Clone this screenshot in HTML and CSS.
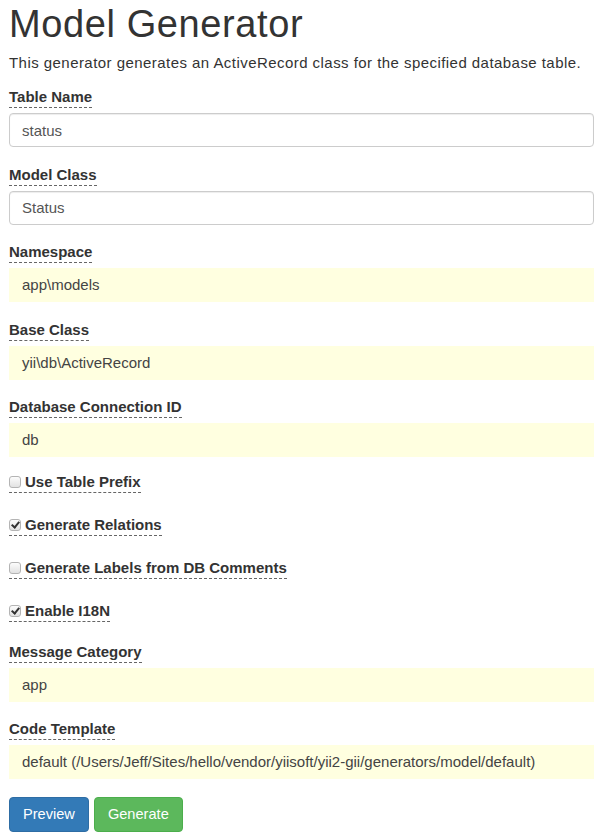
FILE: index.html
```
<!DOCTYPE html>
<html lang="en">
<head>
    <meta charset="UTF-8">
    <title>Model Generator</title>

    <link rel="stylesheet" href="styles.css">
</head>
<body>
<div class="default-view">
    <h1>Model Generator</h1>
    <p class="intro">This generator generates an ActiveRecord class for the specified database table.</p>

    <form class="generator-form">
        <div class="form-group">
            <label class="help">Table Name</label>
            <input type="text" class="form-control" value="status">
        </div>
        <div class="form-group">
            <label class="help">Model Class</label>
            <input type="text" class="form-control" value="Status">
        </div>
        <div class="form-group sticky">
            <label class="help">Namespace</label>
            <div class="sticky-value">app\models</div>
        </div>
        <div class="form-group sticky">
            <label class="help">Base Class</label>
            <div class="sticky-value">yii\db\ActiveRecord</div>
        </div>
        <div class="form-group sticky">
            <label class="help">Database Connection ID</label>
            <div class="sticky-value">db</div>
        </div>

        <div class="form-group checkbox">
            <label class="help"><input type="checkbox">Use Table Prefix</label>
        </div>
        <div class="form-group checkbox">
            <label class="help"><input type="checkbox" checked>Generate Relations</label>
        </div>
        <div class="form-group checkbox">
            <label class="help"><input type="checkbox">Generate Labels from DB Comments</label>
        </div>
        <div class="form-group checkbox">
            <label class="help"><input type="checkbox" checked>Enable I18N</label>
        </div>

        <div class="form-group sticky">
            <label class="help">Message Category</label>
            <div class="sticky-value">app</div>
        </div>
        <div class="form-group sticky">
            <label class="help">Code Template</label>
            <div class="sticky-value">default (/Users/Jeff/Sites/hello/vendor/yiisoft/yii2-gii/generators/model/default)</div>
        </div>

        <div class="buttons">
            <button type="button" class="btn btn-primary">Preview</button>
            <button type="button" class="btn btn-success">Generate</button>
        </div>
    </form>
</div>
</body>
</html>
```

FILE: styles.css
```
* {
    margin: 0;
    padding: 0;
    box-sizing: border-box;
}

body {
    font-family: "Liberation Sans", Arial, sans-serif;
    font-size: 14px;
    line-height: 20px;
    color: #333;
    background-color: #fff;
}

.default-view {
    padding: 4px 6px 0 9px;
}

h1 {
    font-size: 38px;
    font-weight: normal;
    line-height: 40px;
    letter-spacing: 0.6px;
    margin-bottom: 9px;
}

.intro {
    font-size: 15px;
    letter-spacing: 0.45px;
    margin-bottom: 14px;
}

.form-group {
    margin-bottom: 17.5px;
}

.form-group label {
    display: inline-block;
    font-weight: bold;
    font-size: 15px;
    margin-bottom: 5px;
}

label.help {
    border-bottom: 1px dashed #666;
}

.form-control {
    display: block;
    width: 100%;
    height: 34px;
    padding: 6px 12px;
    font-family: inherit;
    font-size: 15px;
    color: #555;
    background-color: #fff;
    border: 1px solid #ccc;
    border-radius: 4px;
    box-shadow: inset 0 1px 1px rgba(0, 0, 0, 0.075);
}

.sticky-value {
    height: 34px;
    padding: 7px 13px;
    font-size: 15px;
    color: #444;
    background-color: #ffffe0;
    white-space: nowrap;
    overflow: hidden;
}

.checkbox {
    margin-bottom: 21.5px;
}

.sticky + .checkbox {
    margin-top: -3px;
}

.checkbox + .sticky {
    margin-top: -2px;
}

.checkbox label {
    display: inline-flex;
    align-items: center;
    margin-bottom: 0;
}

.checkbox input {
    -webkit-appearance: none;
    appearance: none;
    position: relative;
    width: 12px;
    height: 12px;
    margin: 1px 4px 0 0;
    border: 1px solid #b4b4b4;
    border-radius: 3px;
    background: linear-gradient(#fcfcfc, #e2e2e2);
}

.checkbox input:checked::after {
    content: "";
    position: absolute;
    left: 3px;
    top: 0;
    width: 3px;
    height: 6px;
    border: solid #333;
    border-width: 0 2px 2px 0;
    transform: rotate(40deg);
}

.buttons {
    display: flex;
    gap: 5px;
    margin-top: 0;
}

.btn {
    height: 35px;
    padding: 0 13px;
    font-family: inherit;
    font-size: 14.6px;
    color: #fff;
    border: 1px solid transparent;
    border-radius: 4px;
    cursor: pointer;
}

.btn-primary {
    background-color: #337ab7;
    border-color: #2e6da4;
}

.btn-success {
    background-color: #5cb85c;
    border-color: #4cae4c;
}
```
